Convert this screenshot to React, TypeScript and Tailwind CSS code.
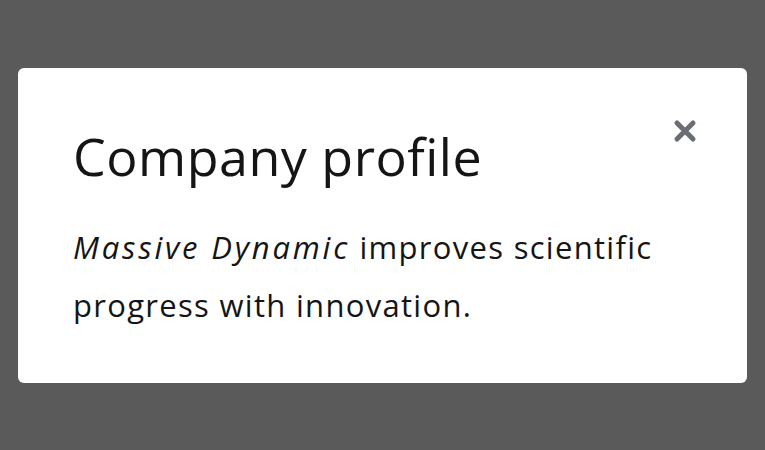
import React from "react";

const CloseIcon: React.FC = () => (
  <svg width="24" height="24" viewBox="0 0 24 24" fill="none">
    <path
      d="M4 4 L20 20 M20 4 L4 20"
      stroke="#6a6e73"
      strokeWidth="5"
      strokeLinecap="round"
    />
  </svg>
);

const App: React.FC = () => {
  return (
    <div className="flex h-screen w-full items-center justify-center bg-[#5a5a5a]">
      <div
        className="flex h-[315px] w-[729px] flex-col rounded-[6px] bg-white pl-[55px] pr-[50px] pt-[52px]"
        style={{ fontFamily: '"Open Sans", sans-serif' }}
      >
        <div className="flex items-start justify-between">
          <h1 className="text-[52px] leading-[72px] tracking-[0.5px] text-[#151515]">Company profile</h1>
          <button className="mt-[-1px] flex h-[24px] w-[24px] items-center justify-center">
            <CloseIcon />
          </button>
        </div>
        <p className="mt-[26px] text-[31px] leading-[58px] tracking-[1.3px] text-[#151515]">
          <em className="tracking-[2.8px]">Massive Dynamic</em> improves scientific progress with innovation.
        </p>
      </div>
    </div>
  );
};

export default App;
